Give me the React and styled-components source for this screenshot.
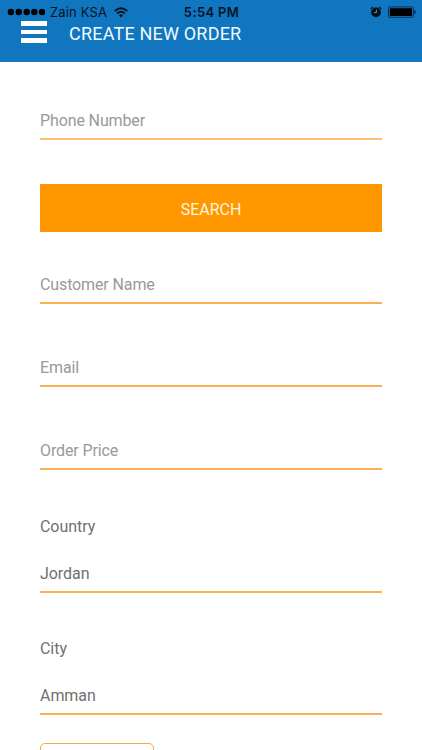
import React from "react";
import styled, { createGlobalStyle } from "styled-components";

const GlobalStyle = createGlobalStyle`
  * { box-sizing: border-box; }
  html, body { margin: 0; height: 100%; overflow: hidden; background: #fff; }
`;

const Screen = styled.div`
  width: 100%;
  height: 750px;
  overflow: hidden;
  background: #fff;
  font-family: Roboto, sans-serif;
`;

const Header = styled.header`
  height: 62px;
  background: #1076bf;
  border-bottom: 1px solid #1b78bb;
`;

const StatusBar = styled.div`
  display: grid;
  grid-template-columns: 1fr auto 1fr;
  align-items: center;
  height: 20px;
  padding: 4px 6px 0 7px;
  font-family: Inter, sans-serif;
  font-size: 13px;
  line-height: 16px;
  color: #06131f;
`;

const Carrier = styled.div`
  display: flex;
  align-items: center;
  white-space: nowrap;
`;

const CarrierName = styled.span`
  margin: 0 7px 0 5px;
  letter-spacing: 0.15px;
`;

const Clock = styled.span`
  font-weight: 600;
  letter-spacing: 0.35px;
`;

const Indicators = styled.div`
  display: flex;
  align-items: center;
  justify-content: flex-end;
  gap: 6px;
`;

const TitleBar = styled.div`
  display: flex;
  align-items: flex-start;
  padding: 1px 0 0 21px;
`;

const MenuButton = styled.button`
  display: flex;
  flex-direction: column;
  gap: 4px;
  width: 26px;
  padding: 0;
  border: 0;
  background: none;
`;

const MenuBar = styled.span`
  height: 4.5px;
  background: #fff;
`;

const Title = styled.h1`
  margin: 2px 0 0 22px;
  font-size: 18px;
  font-weight: 400;
  line-height: 22px;
  letter-spacing: 0.2px;
  color: #f0faff;
`;

const Form = styled.form`
  padding: 48px 40px 0;
`;

const Field = styled.div`
  height: 30px;
  margin-bottom: ${(p) => p.$gap}px;
  border-bottom: 2px solid ${(p) => p.$line || "#f9b057"};
  font-size: 16px;
  line-height: ${(p) => (p.$filled ? 21 : 22)}px;
  letter-spacing: ${(p) => (p.$filled ? -0.05 : -0.12)}px;
  color: ${(p) => (p.$filled ? "#707070" : "#999")};
`;

const Label = styled.label`
  display: block;
  height: 21px;
  margin-bottom: ${(p) => p.$gap}px;
  font-size: 16px;
  line-height: 21px;
  letter-spacing: -0.04px;
  color: #707070;
`;

const SearchButton = styled.button`
  display: block;
  width: 342px;
  height: 48px;
  margin: 0 0 42px;
  padding: 2px 0 0;
  border: 0;
  background: #ff9800;
  font-family: inherit;
  font-size: 16px;
  color: #fff5df;
`;

const OutlineBox = styled.div`
  width: 114px;
  height: 40px;
  border: 1.5px solid #f5a94a;
  border-radius: 5px;
`;

function SignalDots() {
  return (
    <svg width="38" height="8" viewBox="0 0 38 8" fill="#000">
      {[4, 11.9, 19.8, 27.5, 35.2].map((x) => (
        <circle key={x} cx={x - 0.1} cy="4" r="3.2" />
      ))}
    </svg>
  );
}

function Wifi() {
  return (
    <svg width="14" height="11" viewBox="0 0 14 11" fill="none" stroke="#06131f" strokeWidth="1.8">
      <path d="M0.8 4 Q7 -1.5 13.2 4" />
      <path d="M3.1 6.5 Q7 3 10.9 6.5" />
      <path d="M4.9 8 Q7 6.4 9.1 8 L7 10.4 Z" fill="#06131f" stroke="none" />
    </svg>
  );
}

function Alarm() {
  return (
    <svg width="12" height="12" viewBox="0 0 12 12">
      <circle cx="6" cy="6.4" r="4.9" fill="#04101a" />
      <path d="M0.8 3 L3 1 M11.2 3 L9 1" stroke="#04101a" strokeWidth="1.2" />
      <path d="M6.4 3.6 V6.6 H4" stroke="#4b9ad0" strokeWidth="1" fill="none" />
    </svg>
  );
}

function Battery() {
  return (
    <svg width="28" height="12" viewBox="0 0 28 12">
      <rect x="0.5" y="0.9" width="24.8" height="10.4" rx="1" fill="none" stroke="#063052" />
      <rect x="1.8" y="2.2" width="22.2" height="7.8" fill="#000" />
      <path d="M26.2 4.2 Q27.6 4.6 27.6 6.1 Q27.6 7.6 26.2 8 Z" fill="#04101a" />
    </svg>
  );
}

export default function App() {
  return (
    <Screen>
      <GlobalStyle />
      <Header>
        <StatusBar>
          <Carrier>
            <SignalDots />
            <CarrierName>Zain KSA</CarrierName>
            <Wifi />
          </Carrier>
          <Clock>5:54 PM</Clock>
          <Indicators>
            <Alarm />
            <Battery />
          </Indicators>
        </StatusBar>
        <TitleBar>
          <MenuButton type="button" aria-label="Menu">
            <MenuBar />
            <MenuBar />
            <MenuBar />
          </MenuButton>
          <Title>CREATE NEW ORDER</Title>
        </TitleBar>
      </Header>
      <Form>
        <Field $gap={44} $line="#ffbf78">Phone Number</Field>
        <SearchButton type="button">SEARCH</SearchButton>
        <Field $gap={53}>Customer Name</Field>
        <Field $gap={53}>Email</Field>
        <Field $gap={46}>Order Price</Field>
        <Label $gap={26}>Country</Label>
        <Field $filled $gap={45}>Jordan</Field>
        <Label $gap={26}>City</Label>
        <Field $filled $gap={28}>Amman</Field>
        <OutlineBox />
      </Form>
    </Screen>
  );
}
